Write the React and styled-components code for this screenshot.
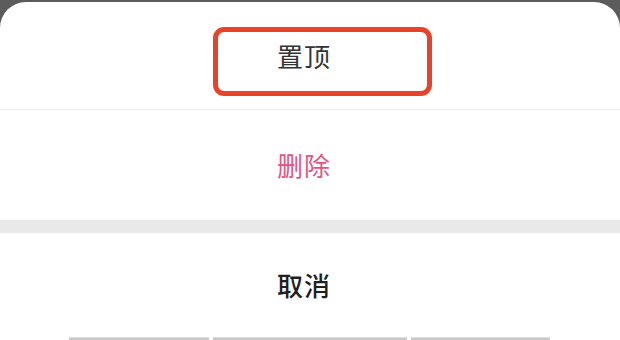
import React from 'react';
import styled, { createGlobalStyle } from 'styled-components';

const GlobalStyle = createGlobalStyle`
  html, body {
    margin: 0;
    padding: 0;
    background: #5c5c5c;
  }
  body {
    font-family: "Noto Sans CJK SC", "Noto Sans", sans-serif;
  }
`;

const Screen = styled.div`
  width: 620px;
  height: 340px;
  overflow: hidden;
  background: #5c5c5c;
  display: flex;
  flex-direction: column;
`;

const Sheet = styled.div`
  flex: 1;
  margin-top: 2px;
  background: #ffffff;
  border-radius: 26px 26px 0 0;
  display: flex;
  flex-direction: column;
`;

const Item = styled.div`
  position: relative;
  height: ${props => props.h}px;
  display: flex;
  align-items: center;
  justify-content: center;
  border-bottom: ${props => (props.divider ? '1px solid #f1f1f1' : 'none')};
`;

const Label = styled.span`
  font-size: 26px;
  line-height: 1;
  letter-spacing: 1px;
  margin-left: -12px;
  color: ${props => props.color || '#333'};
  font-weight: ${props => (props.bold ? 500 : 400)};
`;

const Highlight = styled.div`
  position: absolute;
  left: 213px;
  top: 25px;
  width: 219px;
  height: 69px;
  box-sizing: border-box;
  border: 5px solid #e8432a;
  border-radius: 11px;
  pointer-events: none;
`;

const Band = styled.div`
  height: 13px;
  background: #e9e9e9;
`;

const NavRow = styled.div`
  margin-top: auto;
  height: 3px;
  display: flex;
  gap: 4px;
  padding-left: 69px;
`;

const NavKey = styled.div`
  width: ${props => props.w}px;
  background: #c9c9c9;
  border-top: 1px solid #dcdcdc;
`;

export default function App() {
  return (
    <Screen>
      <GlobalStyle />
      <Sheet>
        <Item h={107} divider>
          <Label color="#333">置顶</Label>
          <Highlight />
        </Item>
        <Item h={110}>
          <Label color="#e2557f">删除</Label>
        </Item>
        <Band />
        <Item h={104}>
          <Label color="#1f1f1f" bold>取消</Label>
        </Item>
        <NavRow>
          <NavKey w={140} />
          <NavKey w={194} />
          <NavKey w={139} />
        </NavRow>
      </Sheet>
    </Screen>
  );
}
